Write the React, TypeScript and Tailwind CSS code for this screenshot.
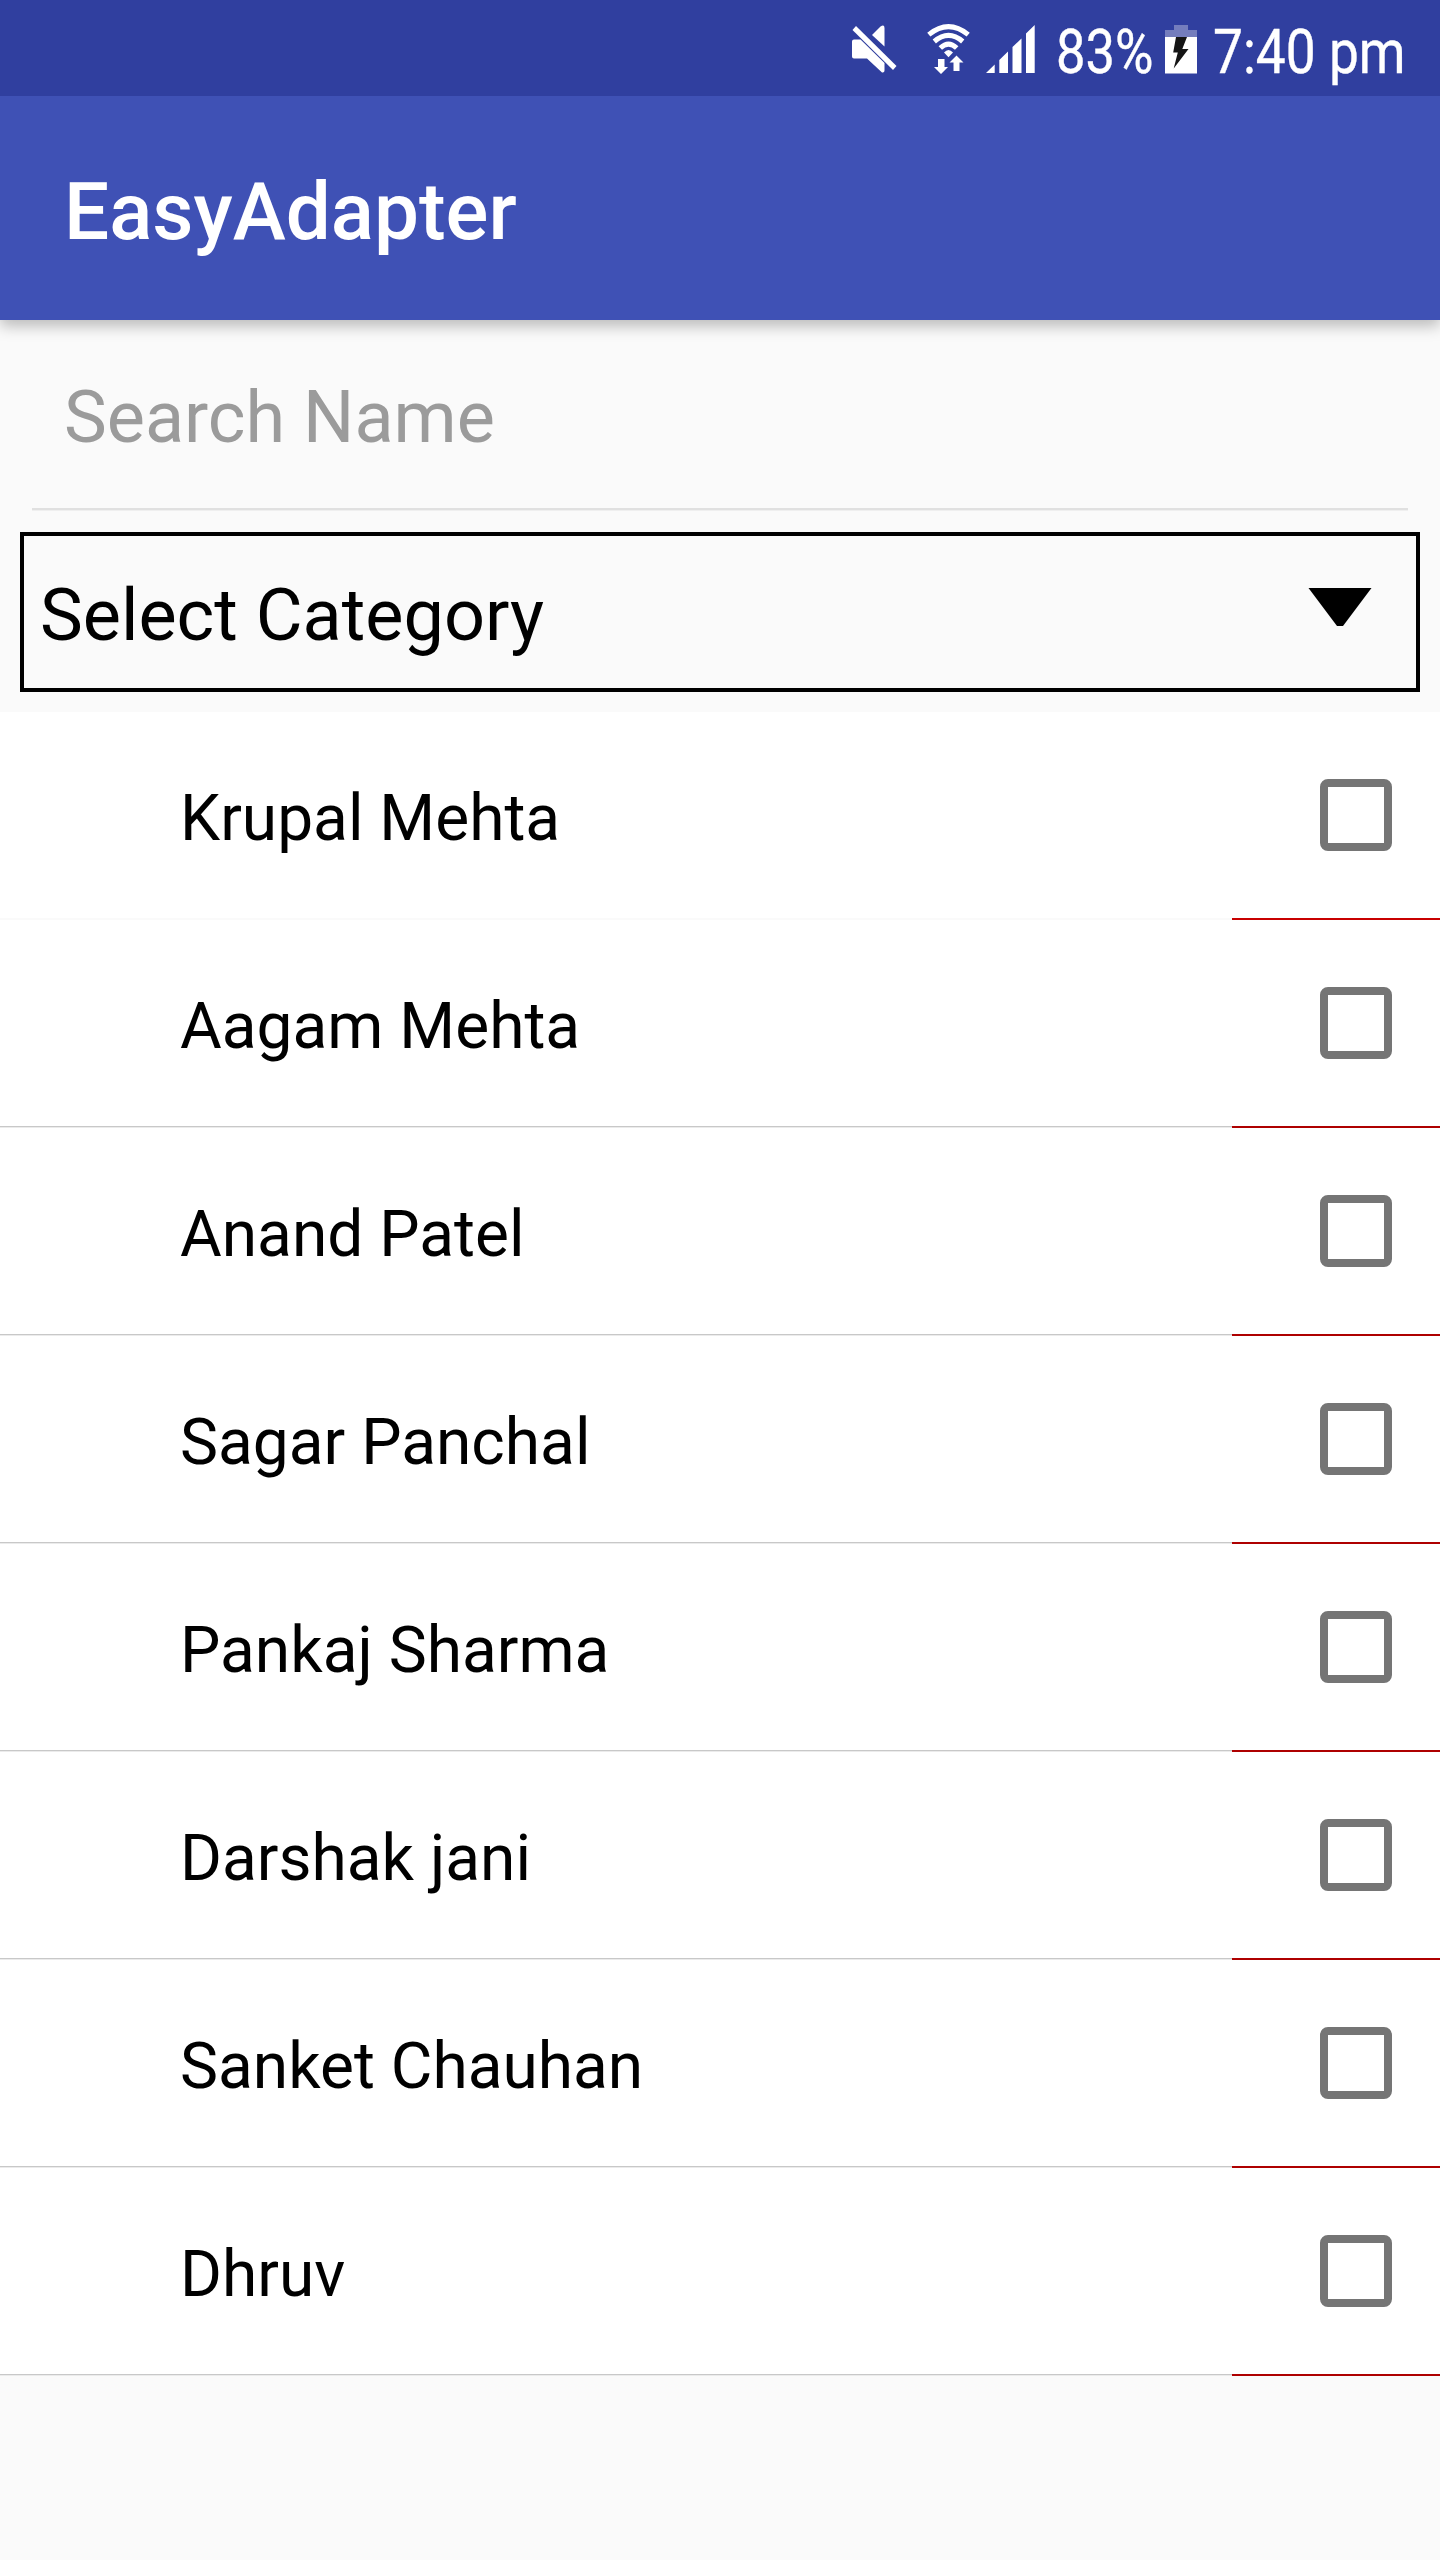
import React from "react";

const names = [
  "Krupal Mehta",
  "Aagam Mehta",
  "Anand Patel",
  "Sagar Panchal",
  "Pankaj Sharma",
  "Darshak jani",
  "Sanket Chauhan",
  "Dhruv",
];

function MuteIcon() {
  return (
    <svg className="h-12 w-[45px] shrink-0" viewBox="0 0 45 48" fill="#fff">
      <path d="M2 14.5H8.5L32.5 38V45.5Q32.5 48 30 47.5L15 33.5H2Q0 33.5 0 31.5V16.5Q0 14.5 2 14.5Z" />
      <path d="M20 10L28.5 1.500Q32.5-1.5 32.5 3.500V21.500Z" />
      <path d="M4 1L44.500 41L41 45L.5 5Z" />
    </svg>
  );
}

function WifiIcon() {
  return (
    <svg className="h-[50px] w-[43px] shrink-0" viewBox="0 0 43 50">
      <g fill="none" stroke="#fff" strokeWidth="5">
        <path d="M1.800 10.600Q21.500 -5.400 41.200 10.600" />
        <path d="M7.300 17.500Q21.500 5.300 35.700 17.500" />
        <path d="M13.300 24Q21.500 16.200 29.700 24" />
      </g>
      <path d="M17 28.500Q21.500 23.500 26 28.500L21.500 33.300Z" fill="#fff" />
      <path d="M11 35H17.500V43H21L14 50L7 43H11Z" fill="#fff" />
      <path d="M26.500 47V38.500H22.500L29.500 31.500L36.500 38.500H32.500V47Z" fill="#fff" />
    </svg>
  );
}

function SignalIcon() {
  return (
    <svg className="h-12 w-[49px] shrink-0" viewBox="0 0 49 48" fill="#fff">
      <path d="M0 48L8.700 39.500V48ZM13.300 48V35L22 26.500V48ZM26.500 48V22L35.500 13.500V48ZM40 48V8.500L48.700 0V48Z" />
    </svg>
  );
}

function BatteryIcon() {
  return (
    <svg className="h-[49px] w-8 shrink-0" viewBox="0 0 32 49">
      <path d="M0 5H9V0H23V5H32V12H0Z" fill="#747dbd" />
      <path d="M0 12H32V48.500H0Z" fill="#fff" />
      <path d="M11 12H22L17.300 24H23.500L8.700 43.500L12.800 27.500H8.200Z" fill="#151515" />
    </svg>
  );
}

function StatusBar() {
  return (
    <div className="relative z-10 flex h-24 bg-[#303f9f] text-white">
      <div className="ml-[852px] mt-[25px]"><MuteIcon /></div>
      <div className="ml-[30px] mt-6"><WifiIcon /></div>
      <div className="ml-4 mt-[25px]"><SignalIcon /></div>
      <div className="ml-[21px] w-[94px] pt-4">
        <span className="block w-max origin-left scale-x-[0.86] text-[61px] leading-[72px] [-webkit-text-stroke:0.4px_white]">83%</span>
      </div>
      <div className="ml-[15px] mt-[25px]"><BatteryIcon /></div>
      <div className="ml-4 pt-4">
        <span className="block w-max origin-left scale-x-[0.873] text-[61px] leading-[72px] [-webkit-text-stroke:0.4px_white]">7:40 pm</span>
      </div>
    </div>
  );
}

function NameRow({ name, first }: { name: string; first: boolean }) {
  return (
    <li className="flex h-[208px] bg-white">
      <div className="flex flex-1 flex-col">
        <div className="h-[206px] pl-[180px] pt-[69px] text-[64px] leading-[76px]">{name}</div>
        <div className={first ? "h-px bg-[#fafafa]" : "h-px bg-[#c8c8c8]"} />
        <div className={first ? "h-px bg-[#fafafa]" : "h-px bg-[#ebebeb]"} />
      </div>
      <div className={first ? "w-[208px] border-b-2 border-[#c80000] pl-[88px] pt-[67px]" : "w-[208px] border-b-2 border-[#ae0000] pl-[88px] pt-[67px]"}>
        <div role="checkbox" aria-checked="false" aria-label={name} className="size-[72px] rounded-lg border-8 border-[#757575]" />
      </div>
    </li>
  );
}

export default function App() {
  return (
    <div className="h-[2560px] w-[1440px] overflow-hidden bg-[#fafafa] font-['Roboto',sans-serif] text-black">
      <StatusBar />
      <header className="flex h-56 items-start bg-[#3f51b5] pl-16 pt-[69px] shadow-[0_6px_14px_rgba(0,0,0,0.26)]">
        <h1 className="text-[80px] font-medium leading-[94px] text-white">EasyAdapter</h1>
      </header>
      <div className="mx-8 h-[191px] pl-8 pt-[56px] text-[72px] leading-[84px] text-[#9b9b9b]">
        <div className="h-[132px]">Search Name</div>
        <div className="-ml-8 h-0.5 bg-[#e0e0e0]" />
        <div className="-ml-8 h-px bg-[#efefef]" />
      </div>
      <div className="mx-5 mt-[21px] flex h-40 items-start justify-between border-4 border-black pl-4 pr-[41px]">
        <span className="pt-[38px] text-[72px] leading-[84px]">Select Category</span>
        <svg className="mt-[50px] h-[44px] w-[68px] blur-[0.6px]" viewBox="0 0 68 44">
          <path d="M1.500 2H64.500L36 40H30Z" />
        </svg>
      </div>
      <ul className="mt-5">
        {names.map((name, i) => (
          <NameRow key={name} name={name} first={i === 0} />
        ))}
      </ul>
    </div>
  );
}
